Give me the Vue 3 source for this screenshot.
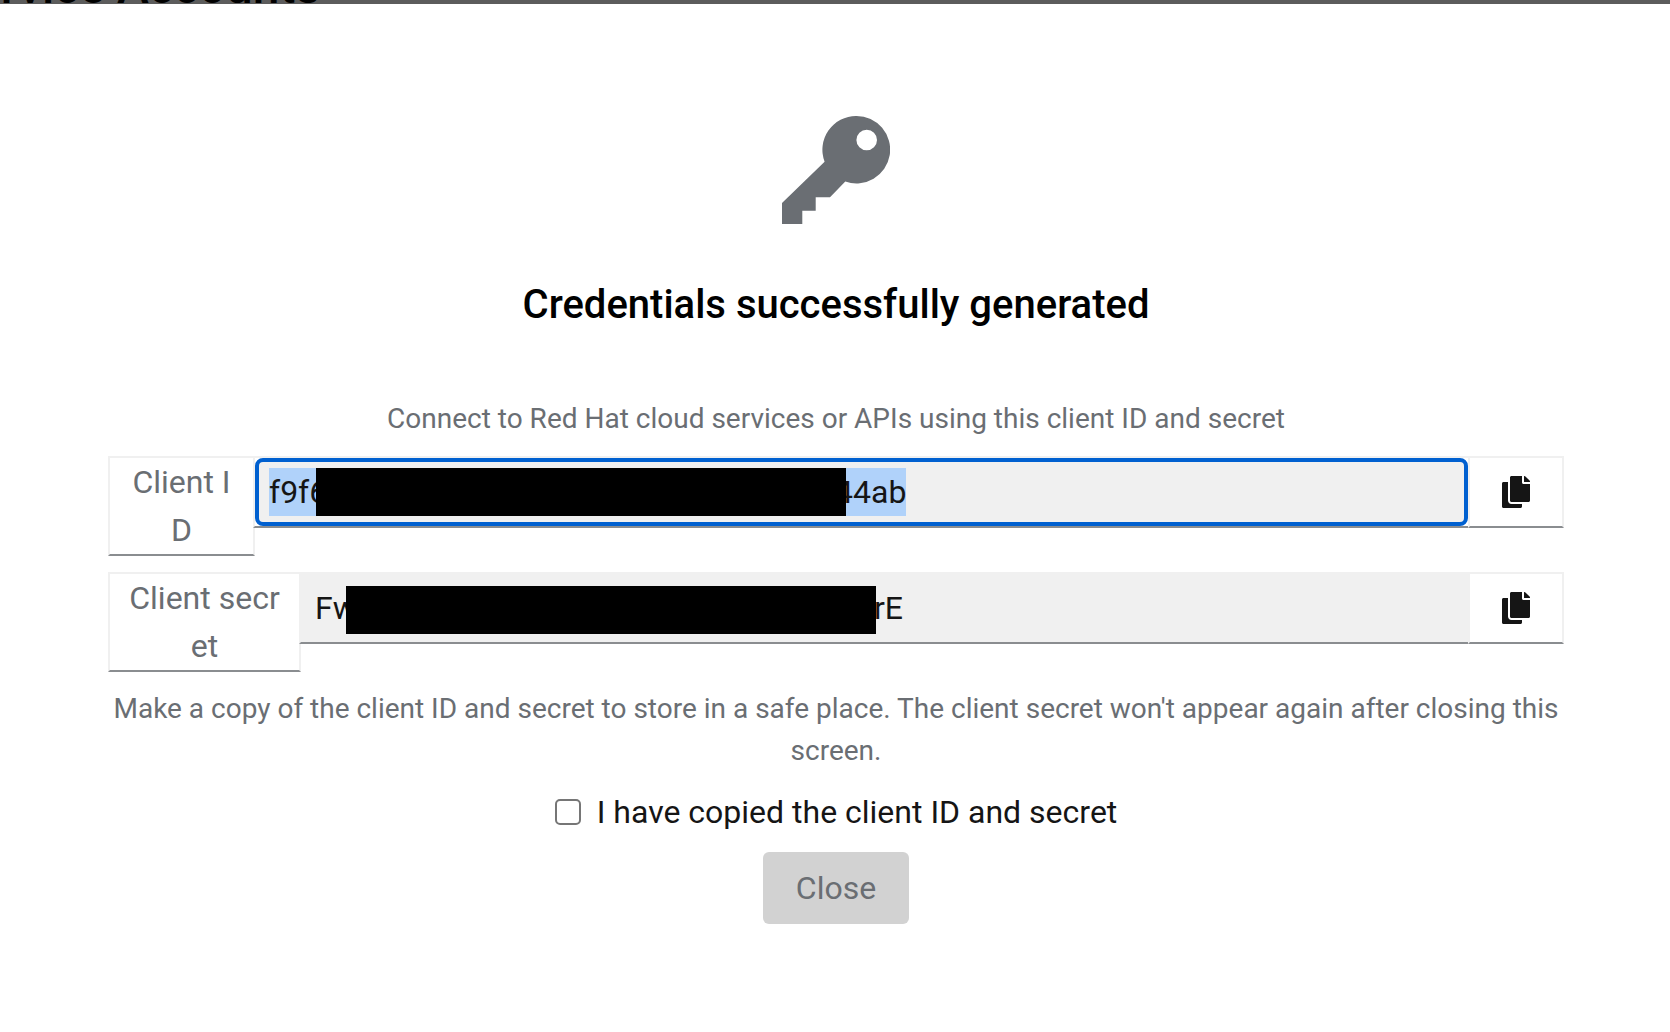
<script setup>
import { ref, onMounted } from 'vue'

const fields = [
  { id: 'client-id', label: 'Client ID', value: 'f9f6' + '0'.repeat(26) + 'ff044ab' },
  { id: 'client-secret', label: 'Client secret', value: 'Fw' + '0'.repeat(26) + 'sssrE' },
]
const copied = ref(false)
const inputs = ref([])

function selectField(i) {
  inputs.value[i].focus()
  inputs.value[i].select()
}

onMounted(() => selectField(0))
</script>

<template>
  <div class="page">
    <header class="backdrop">
      <h1 class="page-title">Service Accounts</h1>
    </header>
    <main class="modal">
      <svg class="key" viewBox="0 0 108 108" aria-hidden="true">
        <path
          fill-rule="evenodd"
          d="M74.3 0a33.7 33.7 0 1 1-11 65.5L48 81.3H33.7v13.4H20.3V108H0V87l42.6-41.3A33.7 33.7 0 0 1 74.3 0zm10.4 13.7a10.3 10.3 0 1 0 0 20.6a10.3 10.3 0 0 0 0-20.6z"
        />
      </svg>
      <h2 class="title">Credentials successfully generated</h2>
      <p class="hint">Connect to Red Hat cloud services or APIs using this client ID and secret</p>

      <div v-for="(f, i) in fields" :key="f.id" class="row" :class="f.id">
        <label class="tag" :for="f.id">{{ f.label }}</label>
        <div class="field">
          <input :id="f.id" ref="inputs" class="value" type="text" readonly :value="f.value" />
          <span class="redaction"></span>
        </div>
        <button class="copy" type="button" :aria-label="'Copy ' + f.label" @click="selectField(i)">
          <svg viewBox="0 0 448 512" width="28" height="32" aria-hidden="true">
            <path
              d="M320 448v40c0 13.255-10.745 24-24 24H24c-13.255 0-24-10.745-24-24V120c0-13.255 10.745-24 24-24h72v296c0 30.879 25.121 56 56 56h168zm0-344V0H152c-13.255 0-24 10.745-24 24v368c0 13.255 10.745 24 24 24h272c13.255 0 24-10.745 24-24V128H344c-13.2 0-24-10.8-24-24zm120.971-31.029L375.029 7.029A24 24 0 0 0 358.059 0H352v96h96v-6.059a24 24 0 0 0-7.029-16.97z"
            />
          </svg>
        </button>
      </div>

      <p class="hint">
        Make a copy of the client ID and secret to store in a safe place. The client secret won't
        appear again after closing this screen.
      </p>
      <label class="confirm">
        <input v-model="copied" class="check" type="checkbox" />
        I have copied the client ID and secret
      </label>
      <button class="close" type="button" :disabled="!copied">Close</button>
    </main>
  </div>
</template>

<style>
body {
  margin: 0;
  background: #fff;
}
</style>

<style scoped>
.page {
  font-family: Roboto, "Liberation Sans", sans-serif;
  font-size: 32px;
  line-height: 48px;
  color: #151515;
}

.backdrop {
  height: 4px;
  overflow: hidden;
  background: #5c5c5c;
}

.page-title {
  margin: -37px 0 0 -54px;
  font-size: 48px;
  line-height: 48px;
  font-weight: 500;
  color: #000;
  white-space: nowrap;
}

.modal {
  display: flex;
  flex-direction: column;
  align-items: center;
  gap: 16px;
  padding: 112px 106px 108px 108px;
}

.key {
  width: 108px;
  height: 108px;
  fill: #6a6e73;
}

.title {
  margin: 39px 0 51px;
  font-size: 40px;
  line-height: 52px;
  font-weight: 500;
  color: #000;
  text-align: center;
}

.hint {
  margin: 0;
  font-size: 28px;
  line-height: 42px;
  color: #6a6e73;
  text-align: center;
}

.row {
  display: flex;
  align-items: flex-start;
  align-self: stretch;
}

.tag {
  box-sizing: border-box;
  flex: none;
  width: 147px;
  padding: 0 18px;
  border: 2px solid #f0f0f0;
  border-bottom-color: #8a8d90;
  color: #6a6e73;
  text-align: center;
  word-break: break-all;
}

.client-secret .tag {
  width: 193px;
}

.field {
  position: relative;
  flex: 1;
  display: flex;
  margin-left: -2px;
  border: 2px solid #f0f0f0;
  border-bottom-color: #8a8d90;
  background: #fff;
}

.value {
  box-sizing: border-box;
  flex: 1;
  min-width: 0;
  height: 68px;
  margin: 0;
  padding: 0 10px;
  border: 4px solid #f0f0f0;
  outline: none;
  background: #f0f0f0;
  color: #151515;
  font: inherit;
}

/* The highlight fills the whole line box, taller than the native selection. */
.value:focus {
  border-color: #0060d0;
  border-radius: 8px;
  background: linear-gradient(#b0d2fa, #b0d2fa) 10px center / 637px 48px no-repeat #f0f0f0;
}

.value::selection {
  background: #b0d2fa;
  color: #151515;
}

.redaction {
  position: absolute;
  top: 10px;
  left: 61px;
  width: 530px;
  height: 48px;
  background: #000;
}

.client-secret .redaction {
  top: 12px;
  left: 45px;
}

.copy {
  box-sizing: border-box;
  position: relative;
  flex: none;
  display: flex;
  align-items: center;
  justify-content: center;
  width: 96px;
  height: 72px;
  margin: 0 0 0 -2px;
  padding: 0;
  border: 2px solid #f0f0f0;
  border-bottom-color: #8a8d90;
  background: #fff;
  fill: #151515;
}

.confirm {
  display: flex;
  align-items: center;
  gap: 16px;
}

.check {
  appearance: none;
  width: 26px;
  height: 26px;
  margin: 0;
  border: 2px solid #767676;
  border-radius: 5px;
  background: #fff;
}

.check:checked {
  background: #0060d0;
}

.close {
  min-width: 146px;
  height: 72px;
  padding: 0 32px;
  border: 0;
  border-radius: 6px;
  background: #0060d0;
  color: #fff;
  font: inherit;
}

.close:disabled {
  background: #d2d2d2;
  color: #6a6e73;
}
</style>
